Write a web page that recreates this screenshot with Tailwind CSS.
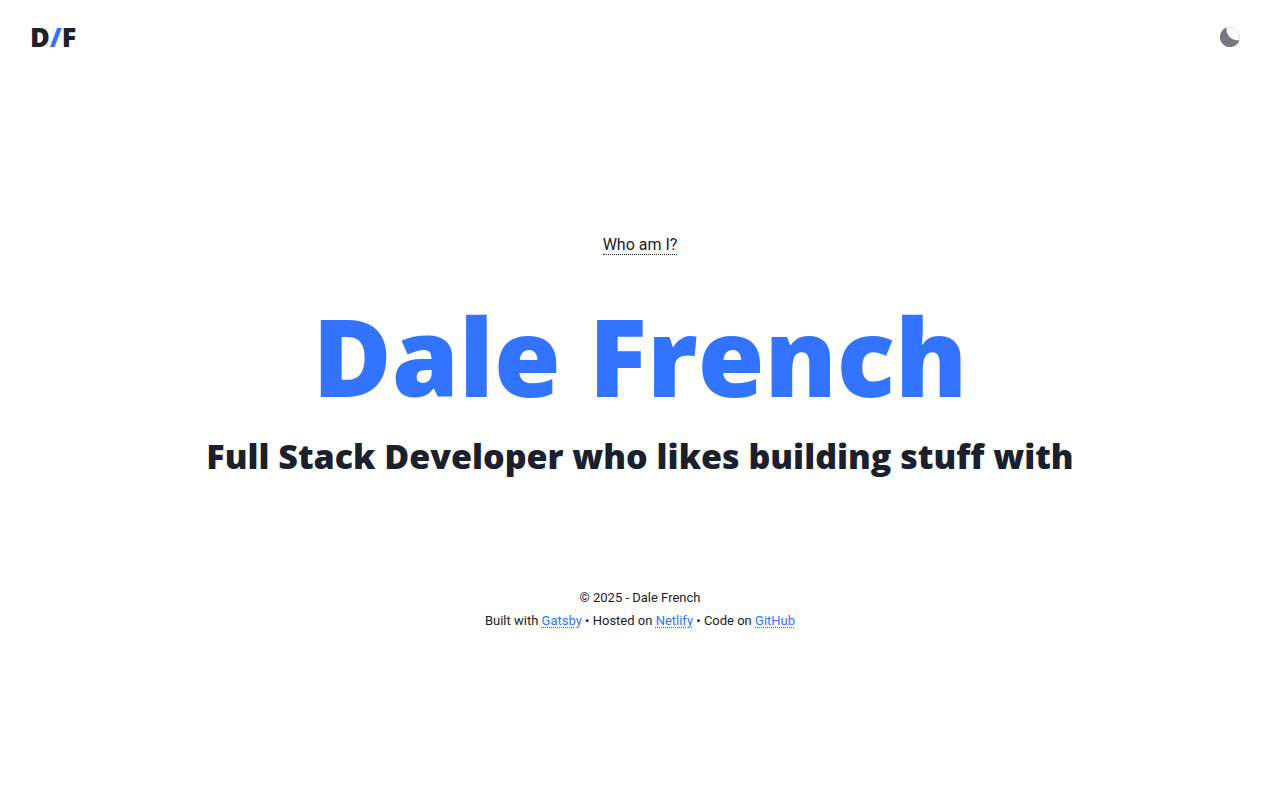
<!DOCTYPE html>
<html lang="en">
<head>
<meta charset="utf-8">
<meta name="viewport" content="width=device-width, initial-scale=1">
<title>Dale French</title>
<script src="https://cdn.jsdelivr.net/npm/@tailwindcss/browser@4"></script>
</head>
<body class="min-h-screen flex flex-col bg-white text-[#1a202c] font-['Roboto',sans-serif]">
<header class="flex items-center justify-between h-[74px] pl-[30px] pr-10">
  <a href="#" class="font-['Open_Sans',sans-serif] font-extrabold text-[27px] leading-8">D<span class="text-[#3273ff]">/</span>F</a>
  <button type="button" aria-label="Toggle dark mode" class="size-5">
    <svg viewBox="0 0 20 20" class="size-5"><circle cx="10" cy="10" r="9.5" fill="#fff" stroke="#dcdde0" stroke-width="0.8"/><path d="M6.7.6A10 10 0 1 0 19.4 13.2 11 11 0 0 1 6.7.6Z" fill="#747981"/></svg>
  </button>
</header>
<main class="flex flex-col items-center pt-[161px] text-center">
  <a href="#" class="text-base leading-[19px] border-b border-dotted border-[#1a202c]">Who am I?</a>
  <h1 class="mt-8 font-['Open_Sans',sans-serif] font-extrabold text-[108px] leading-[138px] text-[#3273ff] whitespace-nowrap">Dale French</h1>
  <h2 class="mt-[7px] font-['Open_Sans',sans-serif] font-extrabold text-[34px] leading-[48px] whitespace-nowrap">Full Stack Developer who likes building stuff with</h2>
</main>
<footer class="mt-[106px] text-center text-[13px] leading-[23px]">
  <p>© 2025 - Dale French</p>
  <p>Built with <a href="#" class="text-[#3273ff] underline decoration-dotted underline-offset-2">Gatsby</a> • Hosted on <a href="#" class="text-[#3273ff] underline decoration-dotted underline-offset-2">Netlify</a> • Code on <a href="#" class="text-[#3273ff] underline decoration-dotted underline-offset-2">GitHub</a></p>
</footer>
</body>
</html>
